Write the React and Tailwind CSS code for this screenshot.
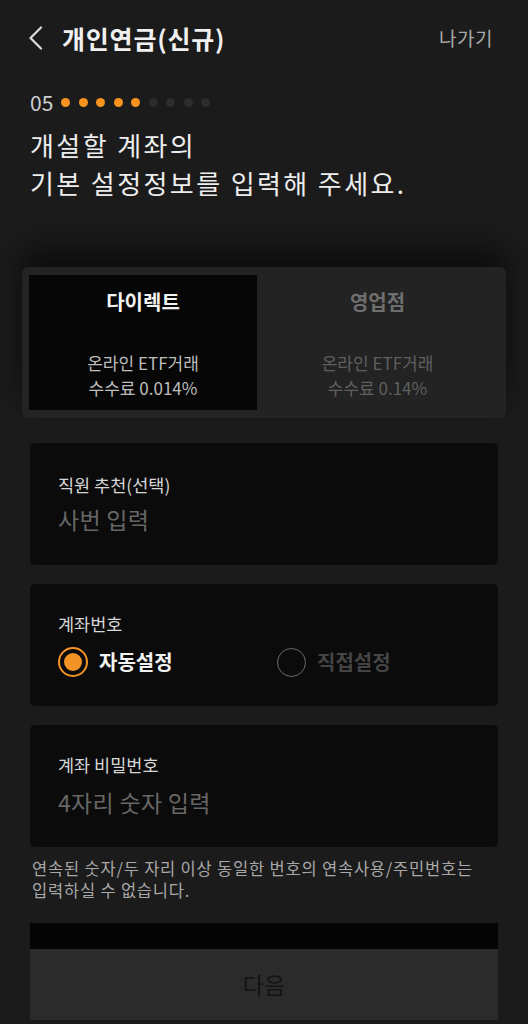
import React, { useState } from 'react';

const font = { fontFamily: '"Noto Sans CJK KR", "Noto Sans", sans-serif' };

function Radio({ checked, label }) {
    return (
        <div className="flex items-center gap-[11px]">
            {checked ? (
                <span className="w-[30px] h-[30px] rounded-full border-2 border-[#f39325] flex items-center justify-center">
                    <span className="w-[18px] h-[18px] rounded-full bg-[#f39325]" />
                </span>
            ) : (
                <span className="w-[29px] h-[29px] rounded-full border-[1.5px] border-[#6c6c6c]" />
            )}
            <span className={checked ? "text-[20px] font-bold text-[#f2f2f2]" : "text-[20px] font-bold text-[#444444]"}>
                {label}
            </span>
        </div>
    );
}

function FieldCard({ label, children, top = 'pt-[29px]' }) {
    return (
        <div className={`h-[122px] rounded-[5px] bg-[#0b0b0b] pl-[28px] ${top}`}>
            <div className="text-[17.5px] leading-[22px] text-[#d6d6d6]">{label}</div>
            {children}
        </div>
    );
}

export default function App() {
    const [tab, setTab] = useState('direct');
    const step = 5;

    return (
        <div className="w-[528px] h-[1024px] overflow-hidden bg-[#1b1b1b] flex flex-col" style={font}>
            {/* Header */}
            <div className="h-[76px] flex items-center pl-[28px] pr-[35px]">
                <svg width="15" height="24" viewBox="0 0 15 24" fill="none">
                    <polyline points="13,1.5 2.5,12 13,22.5" stroke="#dcdcdc" strokeWidth="2.2" strokeLinecap="round" strokeLinejoin="round" />
                </svg>
                <span className="ml-[19px] text-[25px] tracking-[0.8px] font-bold text-[#f0f0f0] leading-none">개인연금(신규)</span>
                <span className="ml-auto text-[19px] tracking-[0.5px] text-[#a9a9a9]">나가기</span>
            </div>

            {/* Progress */}
            <div className="mt-[15px] h-[22px] flex items-center px-[30px]">
                <span className="text-[21px] text-[#cfcfcf] leading-none mr-[8px]">05</span>
                <div className="flex items-center gap-[8.5px]">
                    {Array.from({ length: 9 }).map((_, i) => (
                        <span
                            key={i}
                            className={i < step ? "w-[9px] h-[9px] rounded-full bg-[#f7931e]" : "w-[9px] h-[9px] rounded-full bg-[#2c2c2c]"}
                        />
                    ))}
                </div>
            </div>

            {/* Heading */}
            <div className="mt-[13px] px-[30px] text-[26px] tracking-[2.4px] leading-[38px] text-[#ededed]">
                개설할 계좌의<br />기본 설정정보를 입력해 주세요.
            </div>

            {/* Fee tabs */}
            <div className="mt-[65px] mx-[22px] h-[151px] rounded-[6px] bg-[#232323] p-[8px] pl-[7px] flex shadow-[0_-18px_30px_rgba(0,0,0,0.55)]">
                <button
                    onClick={() => setTab('direct')}
                    className={tab === 'direct' ? "w-[228px] bg-[#060606] flex flex-col items-center pt-[13px]" : "w-[228px] flex flex-col items-center pt-[13px]"}
                >
                    <span className={tab === 'direct' ? "text-[20px] leading-[28px] font-bold text-[#f2f2f2]" : "text-[20px] leading-[28px] font-bold text-[#6e6e6e]"}>다이렉트</span>
                    <span className={tab === 'direct' ? "mt-[34px] text-[17px] leading-[25px] text-[#bdbdbd]" : "mt-[34px] text-[17px] leading-[25px] text-[#5f5f5f]"}>
                        온라인 ETF거래<br />수수료 0.014%
                    </span>
                </button>
                <button
                    onClick={() => setTab('branch')}
                    className={tab === 'branch' ? "flex-1 bg-[#060606] flex flex-col items-center pt-[13px]" : "flex-1 flex flex-col items-center pt-[13px]"}
                >
                    <span className={tab === 'branch' ? "text-[20px] leading-[28px] font-bold text-[#f2f2f2]" : "text-[20px] leading-[28px] font-bold text-[#6e6e6e]"}>영업점</span>
                    <span className={tab === 'branch' ? "mt-[34px] text-[17px] leading-[25px] text-[#bdbdbd]" : "mt-[34px] text-[17px] leading-[25px] text-[#5f5f5f]"}>
                        온라인 ETF거래<br />수수료 0.14%
                    </span>
                </button>
            </div>

            {/* Fields */}
            <div className="mt-[25px] mx-[30px] flex flex-col gap-[19px]">
                <FieldCard label="직원 추천(선택)" top="pt-[31px]">
                    <div className="mt-[8px] text-[23px] tracking-[0.3px] leading-[30px] text-[#676767]">사번 입력</div>
                </FieldCard>
                <FieldCard label="계좌번호">
                    <div className="mt-[12px] flex items-center">
                        <div className="w-[219px]">
                            <Radio checked label="자동설정" />
                        </div>
                        <Radio label="직접설정" />
                    </div>
                </FieldCard>
                <FieldCard label="계좌 비밀번호">
                    <div className="mt-[11px] text-[23px] tracking-[0.3px] leading-[30px] text-[#676767]">4자리 숫자 입력</div>
                </FieldCard>
            </div>

            <p className="mt-[10px] px-[32px] text-[16.5px] tracking-[0.8px] leading-[22px] text-[#a8a8a8] whitespace-nowrap">
                연속된 숫자/두 자리 이상 동일한 번호의 연속사용/주민번호는<br />입력하실 수 없습니다.
            </p>

            {/* Bottom */}
            <div className="mt-[22px] mx-[30px] h-[26px] bg-[#050505]" />
            <button className="mx-[30px] h-[71px] bg-[#2b2b2b] text-[23px] text-[#131313]">다음</button>
        </div>
    );
}
